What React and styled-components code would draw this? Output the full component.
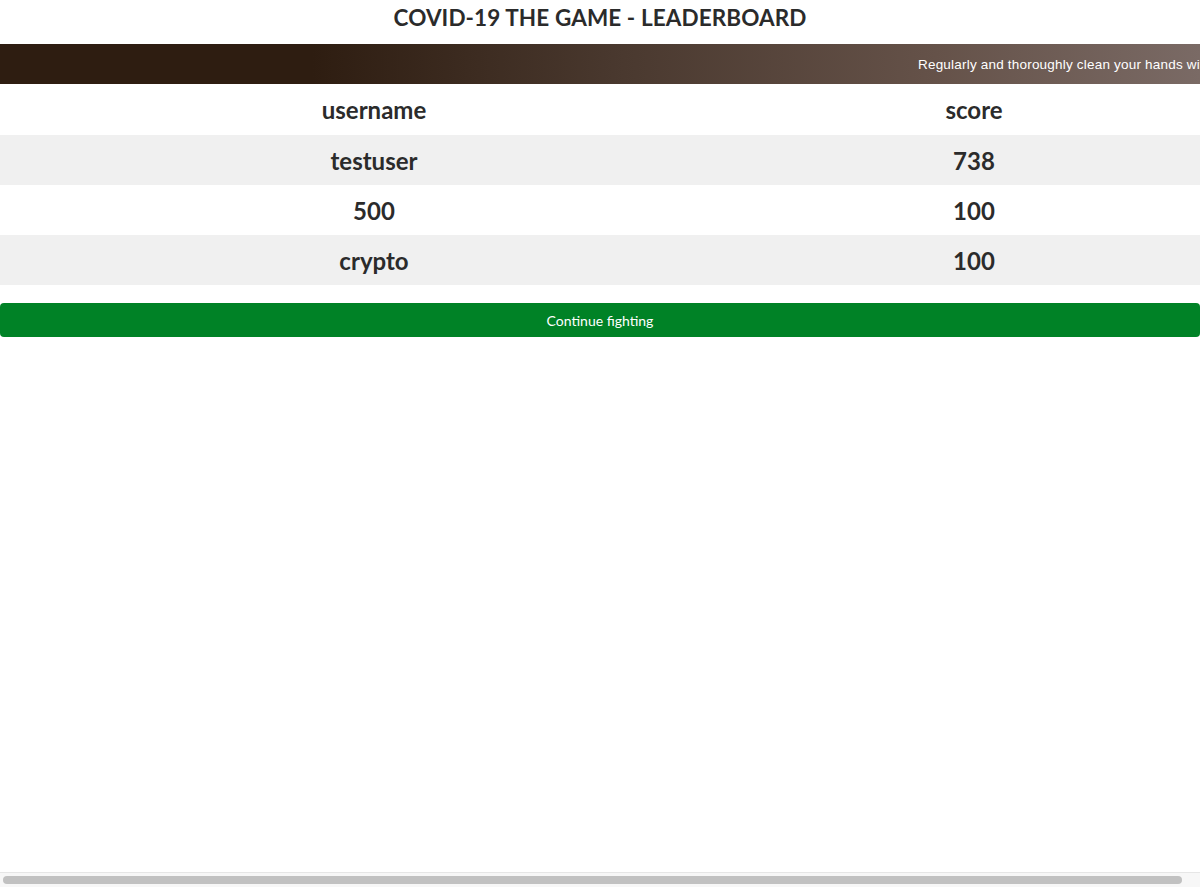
import React from "react";
import styled, { createGlobalStyle } from "styled-components";

const GlobalStyle = createGlobalStyle`
  html, body {
    margin: 0;
    padding: 0;
    background: #fff;
    overflow: hidden;
  }
  body {
    font-family: "Lato", "DejaVu Sans", sans-serif;
    color: #2b2b2b;
  }
`;

const players = [
  { username: "testuser", score: 738 },
  { username: "500", score: 100 },
  { username: "crypto", score: 100 },
];

const Page = styled.div`
  width: 1200px;
  min-height: 887px;
  display: flex;
  flex-direction: column;
`;

const Title = styled.h1`
  margin: 0 0 8px;
  height: 36px;
  line-height: 36px;
  text-align: center;
  font-size: 22.5px;
  font-weight: 700;
  letter-spacing: 0.1px;
  color: #2b2b2b;
`;

const Banner = styled.div`
  height: 40px;
  display: flex;
  align-items: center;
  overflow: hidden;
  background: linear-gradient(to right, #2e1d11 0%, #2e1d11 26%, #4a392f 52%, #655249 78%, #7a6a65 100%);
`;

const Marquee = styled.span`
  padding-left: 918px;
  white-space: nowrap;
  font-family: "Liberation Sans", Arial, sans-serif;
  font-size: 13.5px;
  letter-spacing: 0.2px;
  color: #fff;
`;

const Table = styled.table`
  width: 100%;
  border-collapse: collapse;
  table-layout: fixed;
`;

const Row = styled.tr`
  height: 50px;
  background: ${(p) => (p.$striped ? "#f0f0f0" : "#fff")};
`;

const HeadRow = styled(Row)`
  height: 51px;
`;

const Cell = styled.td`
  width: ${(p) => p.$width};
  padding: 0;
  text-align: center;
  font-size: 24px;
  font-weight: 700;
  color: #2b2b2b;
`;

const HeadCell = styled(Cell).attrs({ as: "th" })``;

const Button = styled.button`
  margin-top: 18px;
  width: 100%;
  height: 34px;
  border: none;
  border-radius: 4px;
  background: #008226;
  color: #fff;
  font-family: "Lato", "DejaVu Sans", sans-serif;
  font-size: 14px;
  cursor: pointer;
`;

const FakeScrollbar = styled.div`
  position: fixed;
  left: 0;
  right: 0;
  bottom: 0;
  height: 15px;
  background: #f7f7f7;
  border-top: 1px solid #e6e6e6;
  box-sizing: border-box;
`;

const Thumb = styled.div`
  position: absolute;
  left: 3px;
  top: 3px;
  width: 1179px;
  height: 8px;
  border-radius: 4px;
  background: #c1c1c1;
`;

export default function App() {
  return (
    <>
      <GlobalStyle />
      <Page>
        <Title>COVID-19 THE GAME - LEADERBOARD</Title>
        <Banner>
          <Marquee>
            Regularly and thoroughly clean your hands with an alcohol-based hand rub or wash them with soap and water.
          </Marquee>
        </Banner>
        <Table>
          <thead>
            <HeadRow>
              <HeadCell $width="748px">username</HeadCell>
              <HeadCell $width="452px">score</HeadCell>
            </HeadRow>
          </thead>
          <tbody>
            {players.map((p, i) => (
              <Row key={p.username} $striped={i % 2 === 0}>
                <Cell $width="748px">{p.username}</Cell>
                <Cell $width="452px">{p.score}</Cell>
              </Row>
            ))}
          </tbody>
        </Table>
        <Button>Continue fighting</Button>
      </Page>
      <FakeScrollbar>
        <Thumb />
      </FakeScrollbar>
    </>
  );
}
